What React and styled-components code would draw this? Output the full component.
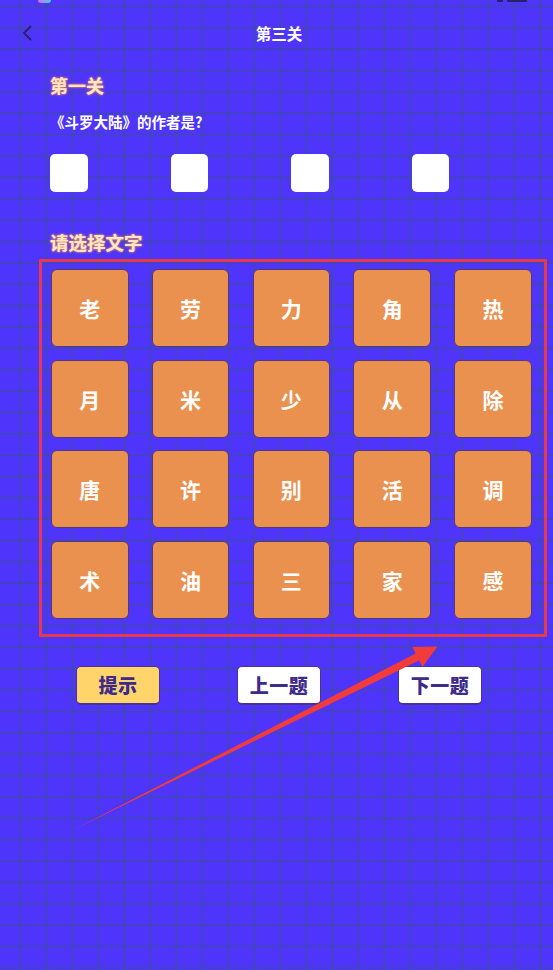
import React from "react";
import styled, { createGlobalStyle } from "styled-components";

const GlobalStyle = createGlobalStyle`
  html, body {
    margin: 0;
    padding: 0;
  }
  body {
    font-family: "Noto Sans CJK SC", "Noto Sans", "Liberation Sans", sans-serif;
  }
  * { box-sizing: border-box; }
`;

const Page = styled.div`
  position: relative;
  width: 553px;
  min-height: 970px;
  overflow: hidden;
  background-color: #4f35fb;
  background-image:
    linear-gradient(to right, transparent 0, rgba(62, 74, 168, 0.55) 0.5px, rgba(62, 74, 168, 0.78) 1.2px, rgba(62, 74, 168, 0.55) 2px, transparent 2.6px),
    linear-gradient(to bottom, transparent 0, rgba(62, 74, 168, 0.55) 0.5px, rgba(62, 74, 168, 0.78) 1.2px, rgba(62, 74, 168, 0.55) 2px, transparent 2.6px);
  background-size: 26px 21.36px;
  background-position: 19.4px 5.4px;
`;

const StatusStrip = styled.div`
  height: 4px;
  display: flex;
  align-items: flex-start;
  padding: 0 26px 0 38px;
`;

const AppDot = styled.div`
  width: 13px;
  height: 3px;
  border-radius: 0 0 3px 3px;
  background: linear-gradient(90deg, #e06cf0, #3fd0f0);
`;

const Spacer = styled.div`
  flex: 1;
`;

const StatusIcon = styled.div`
  width: ${(p) => p.$w}px;
  height: 2px;
  margin-left: ${(p) => p.$ml}px;
  background: #2a2064;
  border-radius: 0 0 1px 1px;
`;

const Header = styled.div`
  height: 58px;
  display: flex;
  align-items: center;
  position: relative;
  padding-left: 20px;
`;

const BackButton = styled.div`
  width: 14px;
  height: 18px;
  display: flex;
  align-items: center;
  justify-content: center;
`;

const Title = styled.div`
  position: absolute;
  left: 0;
  right: 0;
  padding-left: 5px;
  text-align: center;
  color: #ffffff;
  font-size: 15.5px;
  font-weight: 700;
  line-height: 20px;
  pointer-events: none;
`;

const Content = styled.div`
  padding-left: 50px;
  display: flex;
  flex-direction: column;
  align-items: flex-start;
`;

const GlowTitle = styled.div`
  margin-top: ${(p) => p.$mt}px;
  font-size: ${(p) => p.$size}px;
  font-weight: 700;
  line-height: 24px;
  color: #ffe7c8;
  text-shadow:
    0 0 1px #e98a5e,
    0 0 2px #e98a5e,
    0 0 3px rgba(233, 138, 94, 0.8);
`;

const Question = styled.div`
  margin-top: 15px;
  font-size: 14.5px;
  font-weight: 700;
  line-height: 20px;
  color: #ffffff;
`;

const AnswerRow = styled.div`
  margin-top: 22px;
  display: flex;
  gap: 83px;
`;

const AnswerBox = styled.div`
  width: 37.5px;
  height: 37.5px;
  background: #ffffff;
  border-radius: 5px;
`;

const Frame = styled.div`
  margin-top: 5.5px;
  margin-left: -11.5px;
  width: 508px;
  border: 3px solid #e8394c;
  border-radius: 1px;
  padding: 7px 12px 15.5px 9.5px;
`;

const TileGrid = styled.div`
  display: grid;
  grid-template-columns: repeat(5, 77.5px);
  grid-auto-rows: 78px;
  column-gap: 23.3px;
  row-gap: 12.5px;
`;

const Tile = styled.div`
  display: flex;
  align-items: center;
  justify-content: center;
  background: #ea9150;
  border: 1.5px solid #583877;
  border-radius: 6px;
  color: #ffffff;
  font-size: 21px;
  font-weight: 700;
`;

const ButtonRow = styled.div`
  margin-top: 29px;
  padding-left: 76px;
  display: flex;
  gap: 77px;
`;

const ActionButton = styled.div`
  width: 84px;
  height: 38.5px;
  display: flex;
  align-items: center;
  justify-content: center;
  background: ${(p) => (p.$primary ? "#ffd46a" : "#ffffff")};
  border: 1px solid #4a3390;
  border-bottom-width: 2px;
  border-radius: 5px;
  color: #3d2a8a;
  font-size: 19px;
  font-weight: 900;
  letter-spacing: 0.5px;
`;

const Annotation = styled.svg`
  position: absolute;
  left: 0;
  top: 0;
  width: 553px;
  height: 970px;
  pointer-events: none;
`;

const tiles = [
  "老", "劳", "力", "角", "热",
  "月", "米", "少", "从", "除",
  "唐", "许", "别", "活", "调",
  "术", "油", "三", "家", "感",
];

export default function App() {
  return (
    <>
      <GlobalStyle />
      <Page>
        <StatusStrip>
          <AppDot />
          <Spacer />
          <StatusIcon $w={6} $ml={0} />
          <StatusIcon $w={20} $ml={4} />
        </StatusStrip>
        <Header>
          <BackButton>
            <svg width="10" height="16" viewBox="0 0 10 16">
              <path
                d="M8.5 1.5 L2 8 L8.5 14.5"
                fill="none"
                stroke="#2a2064"
                strokeWidth="1.8"
                strokeLinecap="round"
                strokeLinejoin="round"
              />
            </svg>
          </BackButton>
          <Title>第三关</Title>
        </Header>
        <Content>
          <GlowTitle $mt={11} $size={18}>第一关</GlowTitle>
          <Question>《斗罗大陆》的作者是?</Question>
          <AnswerRow>
            <AnswerBox />
            <AnswerBox />
            <AnswerBox />
            <AnswerBox />
          </AnswerRow>
          <GlowTitle $mt={38} $size={18.5}>请选择文字</GlowTitle>
          <Frame>
            <TileGrid>
              {tiles.map((t, i) => (
                <Tile key={i}>{t}</Tile>
              ))}
            </TileGrid>
          </Frame>
        </Content>
        <ButtonRow>
          <ActionButton $primary>提示</ActionButton>
          <ActionButton>上一题</ActionButton>
          <ActionButton>下一题</ActionButton>
        </ButtonRow>
        <Annotation viewBox="0 0 553 970">
          <polygon
            points="73,830 415.6,653.6 412.5,647 437.5,646.5 422.5,667 419,660.4"
            fill="#f23b3b"
          />
        </Annotation>
      </Page>
    </>
  );
}
